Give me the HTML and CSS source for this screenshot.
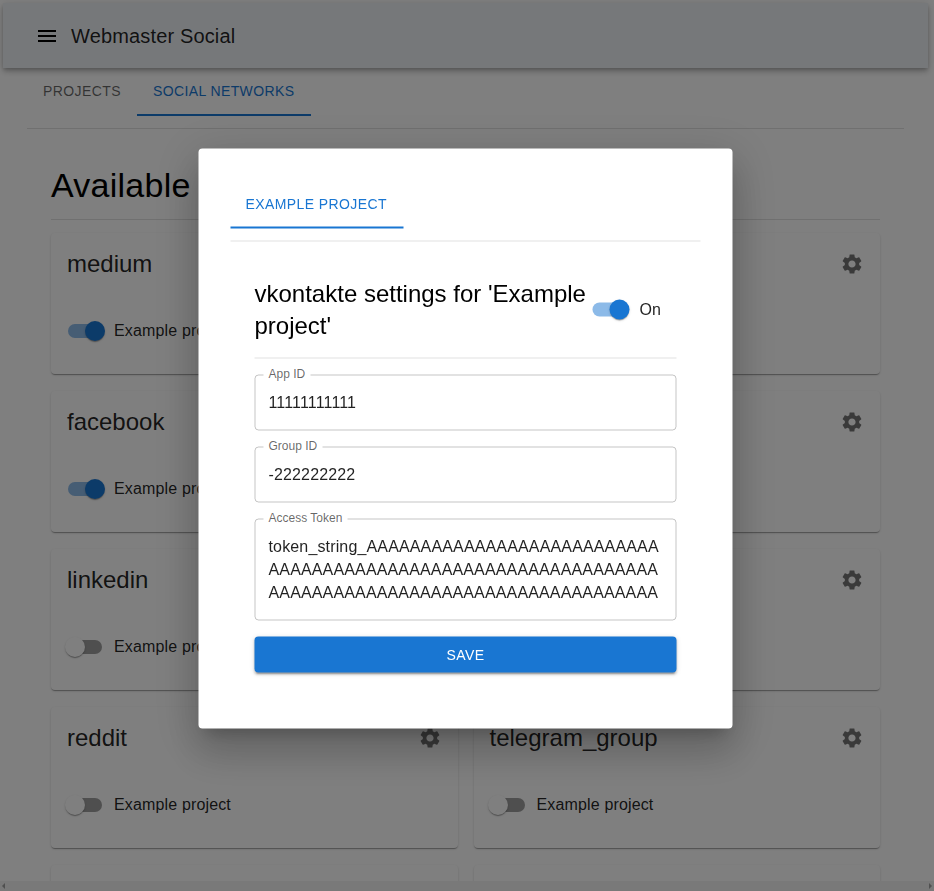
FILE: index.html
```html
<!DOCTYPE html>
<html>
  <head>
    <link rel="stylesheet" href="styles.css">
  </head>
  <body>
    <svg class="icon-defs" width="0" height="0">
      <symbol id="gear" viewBox="0 0 24 24">
        <path d="M19.14 12.94c.04-.3.06-.61.06-.94 0-.32-.02-.64-.07-.94l2.03-1.58c.18-.14.23-.41.12-.61l-1.92-3.32c-.12-.22-.37-.29-.59-.22l-2.39.96c-.5-.38-1.03-.7-1.62-.94l-.36-2.54c-.04-.24-.24-.41-.48-.41h-3.84c-.24 0-.43.17-.47.41l-.36 2.54c-.59.24-1.13.57-1.62.94l-2.39-.96c-.22-.08-.47 0-.59.22L2.74 8.87c-.12.21-.08.47.12.61l2.03 1.58c-.05.3-.09.63-.09.94s.02.64.07.94l-2.03 1.58c-.18.14-.23.41-.12.61l1.92 3.32c.12.22.37.29.59.22l2.39-.96c.5.38 1.03.7 1.62.94l.36 2.54c.05.24.24.41.48.41h3.84c.24 0 .44-.17.47-.41l.36-2.54c.59-.24 1.13-.56 1.62-.94l2.39.96c.22.08.47 0 .59-.22l1.92-3.32c.12-.22.07-.47-.12-.61l-2.01-1.58zM12 15.6c-1.98 0-3.6-1.62-3.6-3.6s1.62-3.6 3.6-3.6 3.6 1.62 3.6 3.6-1.62 3.6-3.6 3.6z" />
      </symbol>
    </svg>

    <div class="page">
      <header class="appbar">
        <svg class="menu-icon" viewBox="0 0 24 24"><path d="M3 18h18v-2H3v2zm0-5h18v-2H3v2zm0-7v2h18V6H3z" /></svg>
        <div class="appbar-title">Webmaster Social</div>
      </header>

      <main class="main">
        <div class="tabs">
          <div class="tab">Projects</div>
          <div class="tab tab_active">Social Networks</div>
        </div>
        <hr class="line tabs-line" />

        <section class="content">
          <h1 class="heading">Available</h1>
          <hr class="line heading-line" />

          <div class="grid">
            <div class="card">
              <div class="card-head">
                <div class="card-title">medium</div>
                <svg class="gear"><use href="#gear" /></svg>
              </div>
              <div class="card-row">
                <span class="switch switch_on"><span class="switch-track"></span><span class="switch-thumb"></span></span>
                <span class="card-label">Example project</span>
              </div>
            </div>
            <div class="card">
              <div class="card-head">
                <div class="card-title"></div>
                <svg class="gear"><use href="#gear" /></svg>
              </div>
            </div>

            <div class="card">
              <div class="card-head">
                <div class="card-title">facebook</div>
                <svg class="gear"><use href="#gear" /></svg>
              </div>
              <div class="card-row">
                <span class="switch switch_on"><span class="switch-track"></span><span class="switch-thumb"></span></span>
                <span class="card-label">Example project</span>
              </div>
            </div>
            <div class="card">
              <div class="card-head">
                <div class="card-title"></div>
                <svg class="gear"><use href="#gear" /></svg>
              </div>
            </div>

            <div class="card">
              <div class="card-head">
                <div class="card-title">linkedin</div>
                <svg class="gear"><use href="#gear" /></svg>
              </div>
              <div class="card-row">
                <span class="switch"><span class="switch-track"></span><span class="switch-thumb"></span></span>
                <span class="card-label">Example project</span>
              </div>
            </div>
            <div class="card">
              <div class="card-head">
                <div class="card-title"></div>
                <svg class="gear"><use href="#gear" /></svg>
              </div>
            </div>

            <div class="card">
              <div class="card-head">
                <div class="card-title">reddit</div>
                <svg class="gear"><use href="#gear" /></svg>
              </div>
              <div class="card-row">
                <span class="switch"><span class="switch-track"></span><span class="switch-thumb"></span></span>
                <span class="card-label">Example project</span>
              </div>
            </div>
            <div class="card">
              <div class="card-head">
                <div class="card-title">telegram_group</div>
                <svg class="gear"><use href="#gear" /></svg>
              </div>
              <div class="card-row">
                <span class="switch"><span class="switch-track"></span><span class="switch-thumb"></span></span>
                <span class="card-label">Example project</span>
              </div>
            </div>

            <div class="card"></div>
            <div class="card"></div>
          </div>
        </section>
      </main>
    </div>

    <div class="backdrop">
      <div class="dialog">
        <div class="tabs">
          <div class="tab tab_active tab_dialog">Example Project</div>
        </div>
        <hr class="line dialog-tabs-line" />

        <div class="settings">
          <div class="settings-head">
            <h2 class="settings-title">vkontakte settings for 'Example project'</h2>
            <div class="settings-toggle">
              <span class="switch switch_on"><span class="switch-track"></span><span class="switch-thumb"></span></span>
              <span class="settings-toggle-label">On</span>
            </div>
          </div>
          <hr class="line settings-line" />

          <div class="field">
            <div class="field-label">App ID</div>
            <div class="field-value">11111111111</div>
          </div>
          <div class="field">
            <div class="field-label">Group ID</div>
            <div class="field-value">-222222222</div>
          </div>
          <div class="field field_multi">
            <div class="field-label">Access Token</div>
            <div class="field-value field-value_multi">token_string_AAAAAAAAAAAAAAAAAAAAAAAAAAAAAAAAAAAAAAAAAAAAAAAAAAAAAAAAAAAAAAAAAAAAAAAAAAAAAAAAAAAAAAAAAAAAAAAAAAA</div>
          </div>

          <div class="save">Save</div>
        </div>
      </div>
    </div>

    <div class="scrollbar">
      <span class="scrollbar-arrow scrollbar-arrow_left"></span>
      <span class="scrollbar-arrow scrollbar-arrow_right"></span>
    </div>
  </body>
</html>
```

FILE: styles.css
```css
:root {
  height: 100%;
  overflow: hidden;
}

body {
  margin: 0;
  height: 100%;
  overflow: hidden;
  background: #fff;
  font-family: "Liberation Sans", Arial, sans-serif;
  color: rgba(0, 0, 0, 0.87);
}

.icon-defs {
  display: block;
}

.page {
  padding: 3px 6px 0 3px;
}

.line {
  margin: 0;
  border: 0;
  height: 1px;
  background: rgba(0, 0, 0, 0.12);
}

/* app bar */

.appbar {
  height: 65px;
  display: flex;
  align-items: center;
  padding: 0 32px;
  background: #edf0f5;
  box-shadow: 0 2px 4px -1px rgba(0, 0, 0, 0.2), 0 4px 5px 0 rgba(0, 0, 0, 0.14),
    0 1px 10px 0 rgba(0, 0, 0, 0.12);
  position: relative;
}

.menu-icon {
  width: 24px;
  height: 24px;
  margin-right: 12px;
}

.appbar-title {
  font-size: 20px;
  line-height: 32px;
  letter-spacing: 0.15px;
}

/* tabs */

.main {
  padding: 0 24px;
}

.tabs {
  display: flex;
  height: 48px;
}

.tab {
  box-sizing: border-box;
  min-width: 90px;
  height: 48px;
  padding: 0 16px;
  display: flex;
  align-items: center;
  justify-content: center;
  font-size: 14px;
  letter-spacing: 0.4px;
  text-transform: uppercase;
  color: rgba(0, 0, 0, 0.6);
  border-bottom: 2px solid transparent;
}

.tab_active {
  min-width: 160px;
  color: #1976d2;
  border-bottom-color: #1976d2;
}

.tab_dialog {
  padding: 0 17px 0 15px;
}

.tabs-line {
  margin-top: 12px;
}

/* cards */

.content {
  padding: 24px 24px 0;
}

.heading {
  margin: 0;
  font-size: 34px;
  font-weight: 400;
  line-height: 42px;
  letter-spacing: 0.25px;
  color: #000;
  padding-top: 11px;
  white-space: nowrap;
}

.heading-line {
  margin-top: 13px;
  margin-bottom: 13px;
}

.grid {
  display: grid;
  grid-template-columns: 1fr 1fr;
  column-gap: 16px;
  row-gap: 17px;
  grid-auto-rows: 141px;
}

.card {
  box-sizing: border-box;
  padding: 16px;
  background: #fff;
  border-radius: 4px;
  box-shadow: 0 2px 1px -1px rgba(0, 0, 0, 0.2), 0 1px 1px 0 rgba(0, 0, 0, 0.14),
    0 1px 3px 0 rgba(0, 0, 0, 0.12);
}

.card-head {
  display: flex;
  justify-content: space-between;
  height: 32px;
}

.card-title {
  font-size: 24px;
  line-height: 30px;
}

.gear {
  width: 24px;
  height: 24px;
  margin: 3px 0 0;
  fill: rgba(0, 0, 0, 0.54);
}

.card-row {
  display: flex;
  align-items: center;
  margin-top: 38px;
  height: 24px;
  padding-left: 1px;
}

.card-label {
  font-size: 16px;
  letter-spacing: 0.15px;
  margin-left: 12px;
  white-space: nowrap;
}

/* switch */

.switch {
  position: relative;
  display: inline-block;
  width: 34px;
  height: 14px;
  flex: none;
}

.switch-track {
  position: absolute;
  left: 0;
  top: 0;
  width: 34px;
  height: 14px;
  border-radius: 7px;
  background: #000;
  opacity: 0.38;
}

.switch-thumb {
  position: absolute;
  left: -3px;
  top: -3px;
  width: 20px;
  height: 20px;
  border-radius: 50%;
  background: #fff;
  box-shadow: 0 2px 1px -1px rgba(0, 0, 0, 0.2), 0 1px 1px 0 rgba(0, 0, 0, 0.14),
    0 1px 3px 0 rgba(0, 0, 0, 0.12);
}

.switch_on .switch-track {
  background: #1976d2;
  opacity: 0.5;
}

.switch_on .switch-thumb {
  left: 17px;
  background: #1976d2;
}

/* dialog */

.backdrop {
  position: fixed;
  inset: 0;
  background: rgba(0, 0, 0, 0.5);
}

.dialog {
  position: absolute;
  left: 199px;
  top: 149px;
  transform: translate(-0.5px, -0.5px);
  box-sizing: border-box;
  width: 534px;
  height: 580px;
  padding: 32px;
  background: #fff;
  border-radius: 4px;
  box-shadow: 0 11px 15px -7px rgba(0, 0, 0, 0.2),
    0 24px 38px 3px rgba(0, 0, 0, 0.14), 0 9px 46px 8px rgba(0, 0, 0, 0.12);
}

.dialog-tabs-line {
  margin-top: 12px;
}

.settings {
  padding: 24px;
}

.settings-head {
  display: flex;
  align-items: center;
  padding-top: 12px;
}

.settings-title {
  flex: 1;
  margin: 0;
  font-size: 24px;
  font-weight: 400;
  line-height: 32px;
  color: #000;
}

.settings-toggle {
  display: flex;
  align-items: center;
  width: 84px;
}

.settings-toggle-label {
  font-size: 16px;
  letter-spacing: 0.15px;
  margin-left: 13px;
}

.settings-line {
  margin-top: 16px;
  margin-bottom: 16px;
}

.field {
  position: relative;
  box-sizing: border-box;
  height: 56px;
  padding: 0 13px;
  margin-bottom: 16px;
  border: 1px solid rgba(0, 0, 0, 0.23);
  border-radius: 4px;
}

.field_multi {
  height: 102px;
}

.field-label {
  position: absolute;
  left: 8px;
  top: -9px;
  padding: 0 5px;
  background: #fff;
  font-size: 12px;
  line-height: 15px;
  color: rgba(0, 0, 0, 0.6);
}

.field-value {
  font-size: 16px;
  letter-spacing: 0.15px;
  line-height: 23px;
  padding-top: 15px;
}

.field-value_multi {
  word-break: break-all;
}

.save {
  height: 36px;
  display: flex;
  align-items: center;
  justify-content: center;
  background: #1976d2;
  border-radius: 4px;
  color: #fff;
  font-size: 14px;
  letter-spacing: 0.4px;
  text-transform: uppercase;
  box-shadow: 0 3px 1px -2px rgba(0, 0, 0, 0.2), 0 2px 2px 0 rgba(0, 0, 0, 0.14),
    0 1px 5px 0 rgba(0, 0, 0, 0.12);
}

/* scrollbar */

.scrollbar {
  position: fixed;
  left: 0;
  right: 0;
  bottom: 0;
  height: 10px;
  background: #797979;
}

.scrollbar-arrow {
  position: absolute;
  top: 2px;
  border: 3px solid transparent;
}

.scrollbar-arrow_left {
  left: -1px;
  border-right-color: #505050;
}

.scrollbar-arrow_right {
  right: -1px;
  border-left-color: #505050;
}
```
